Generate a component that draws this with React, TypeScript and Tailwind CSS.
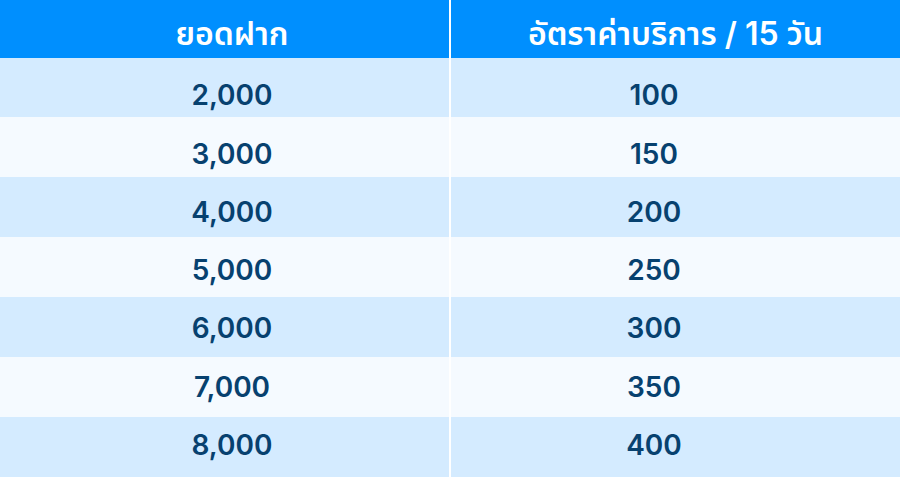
export default function App() {
  const rows = [
    ["2,000", "100", "pt-[15px]"],
    ["3,000", "150", "pt-[13px]"],
    ["4,000", "200", "pt-[9px]"],
    ["5,000", "250", "pt-[6px]"],
    ["6,000", "300", "pt-[2px]"],
    ["7,000", "350", "pb-[1px]"],
    ["8,000", "400", "pb-[4px]"],
  ];
  return (
    <div
      className="w-[900px] h-[477px] overflow-hidden bg-white"
      style={{ fontFamily: 'Inter, "Noto Sans", "Noto Sans Thai", sans-serif' }}
    >
      <div className="grid grid-cols-[451px_449px] h-[58px] bg-[#008ffe] text-white text-[32px] font-semibold leading-none">
        <div className="flex items-center justify-center border-r-2 border-white pt-[9px] pl-[15px]">ยอดฝาก</div>
        <div className="flex items-center justify-center pt-[9px]">อัตราค่าบริการ / 15 วัน</div>
      </div>
      {rows.map((r, i) => (
        <div
          key={i}
          className={`grid grid-cols-[451px_449px] ${i === 0 ? "h-[59px]" : "h-[60px]"} ${
            i % 2 === 0 ? "bg-[#d4ebff]" : "bg-[#f5faff]"
          } text-[#07416f] text-[28px] font-semibold leading-none`}
        >
          <div className={`flex items-center justify-center border-r-2 border-white pl-[15px] ${r[2]}`}>{r[0]}</div>
          <div className={`flex items-center justify-center pr-[43px] ${r[2]}`}>{r[1]}</div>
        </div>
      ))}
    </div>
  );
}
